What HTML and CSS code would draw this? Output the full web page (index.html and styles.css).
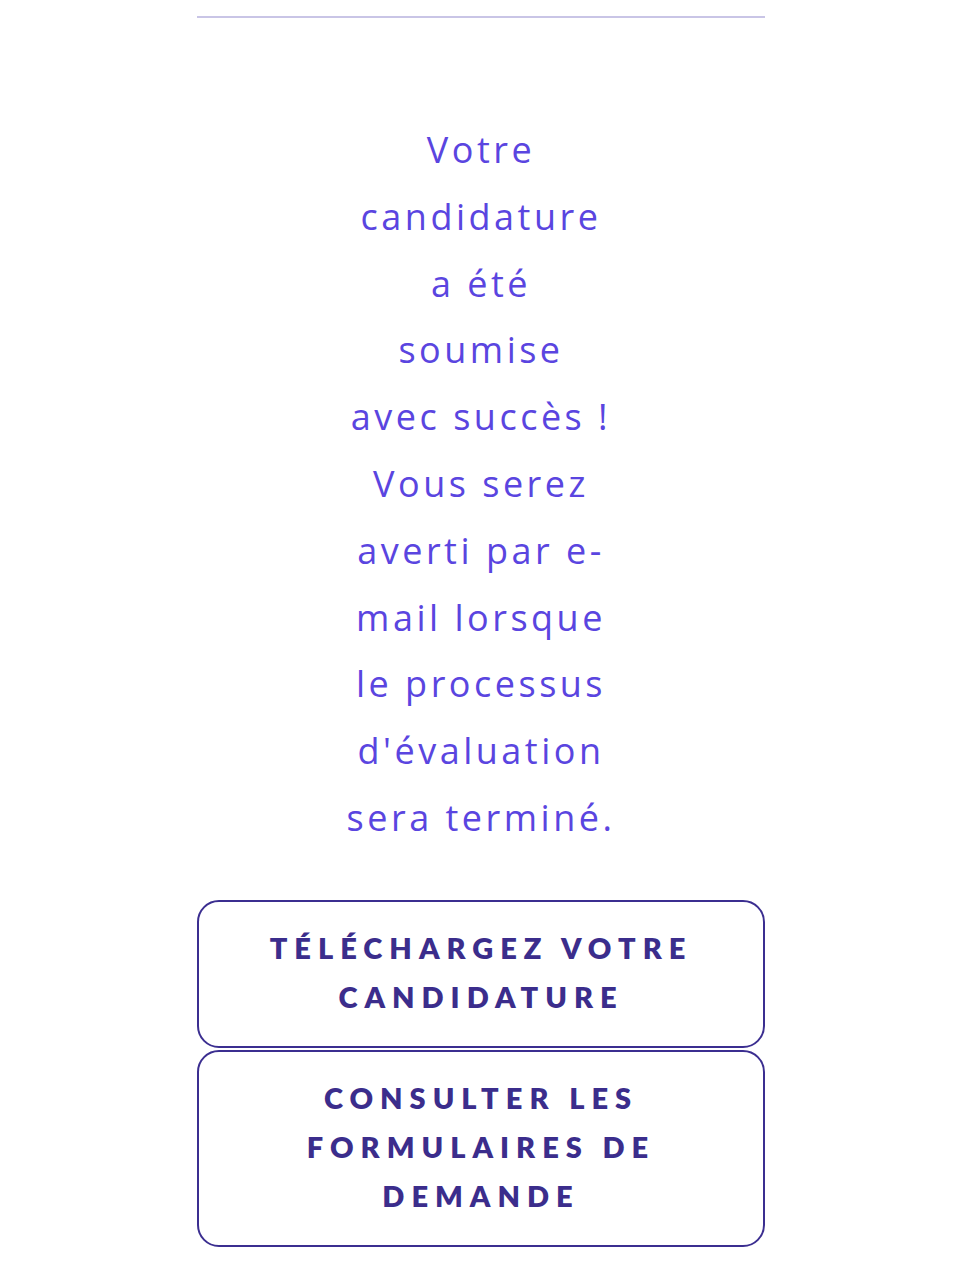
FILE: index.html
```html
<!DOCTYPE html>
<html lang="fr">
<head>
    <meta charset="UTF-8">
    <meta name="viewport" content="width=device-width, initial-scale=1.0">
    <title>Candidature envoyée</title>
    <link rel="stylesheet" href="styles.css">
</head>
<body>
    <div class="page">
        <hr class="divider">
        <p class="message">Votre<br>candidature<br>a été<br>soumise<br>avec succès&nbsp;!<br>Vous serez<br>averti par e-<br>mail lorsque<br>le processus<br>d'évaluation<br>sera terminé.</p>
        <div class="actions">
            <button class="outline-button">Téléchargez votre candidature</button>
            <button class="outline-button">Consulter les formulaires de demande</button>
        </div>
    </div>
</body>
</html>
```

FILE: styles.css
```css
body {
    margin: 0;
    background-color: #fff;
    font-family: "Open Sans", Arial, sans-serif;
}

.page {
    width: 568px;
    margin: 0 auto;
    padding-top: 16px;
}

.divider {
    border: none;
    height: 2px;
    background-color: #c9c5e6;
    margin: 0;
}

.message {
    margin: 99px auto 0;
    text-align: center;
    color: #5a45e0;
    font-size: 36px;
    line-height: 66.8px;
    letter-spacing: 3.5px;
}

.actions {
    display: flex;
    flex-direction: column;
    gap: 2px;
    margin-top: 48px;
}

.outline-button {
    background-color: #fff;
    border: 2px solid #3b2e90;
    border-radius: 22px;
    padding: 21px 40px 25px;
    color: #3b2d8c;
    font-family: Lato, "Open Sans", sans-serif;
    font-weight: 800;
    font-size: 29px;
    line-height: 49px;
    letter-spacing: 7px;
    text-transform: uppercase;
    text-align: center;
    cursor: pointer;
}
```
